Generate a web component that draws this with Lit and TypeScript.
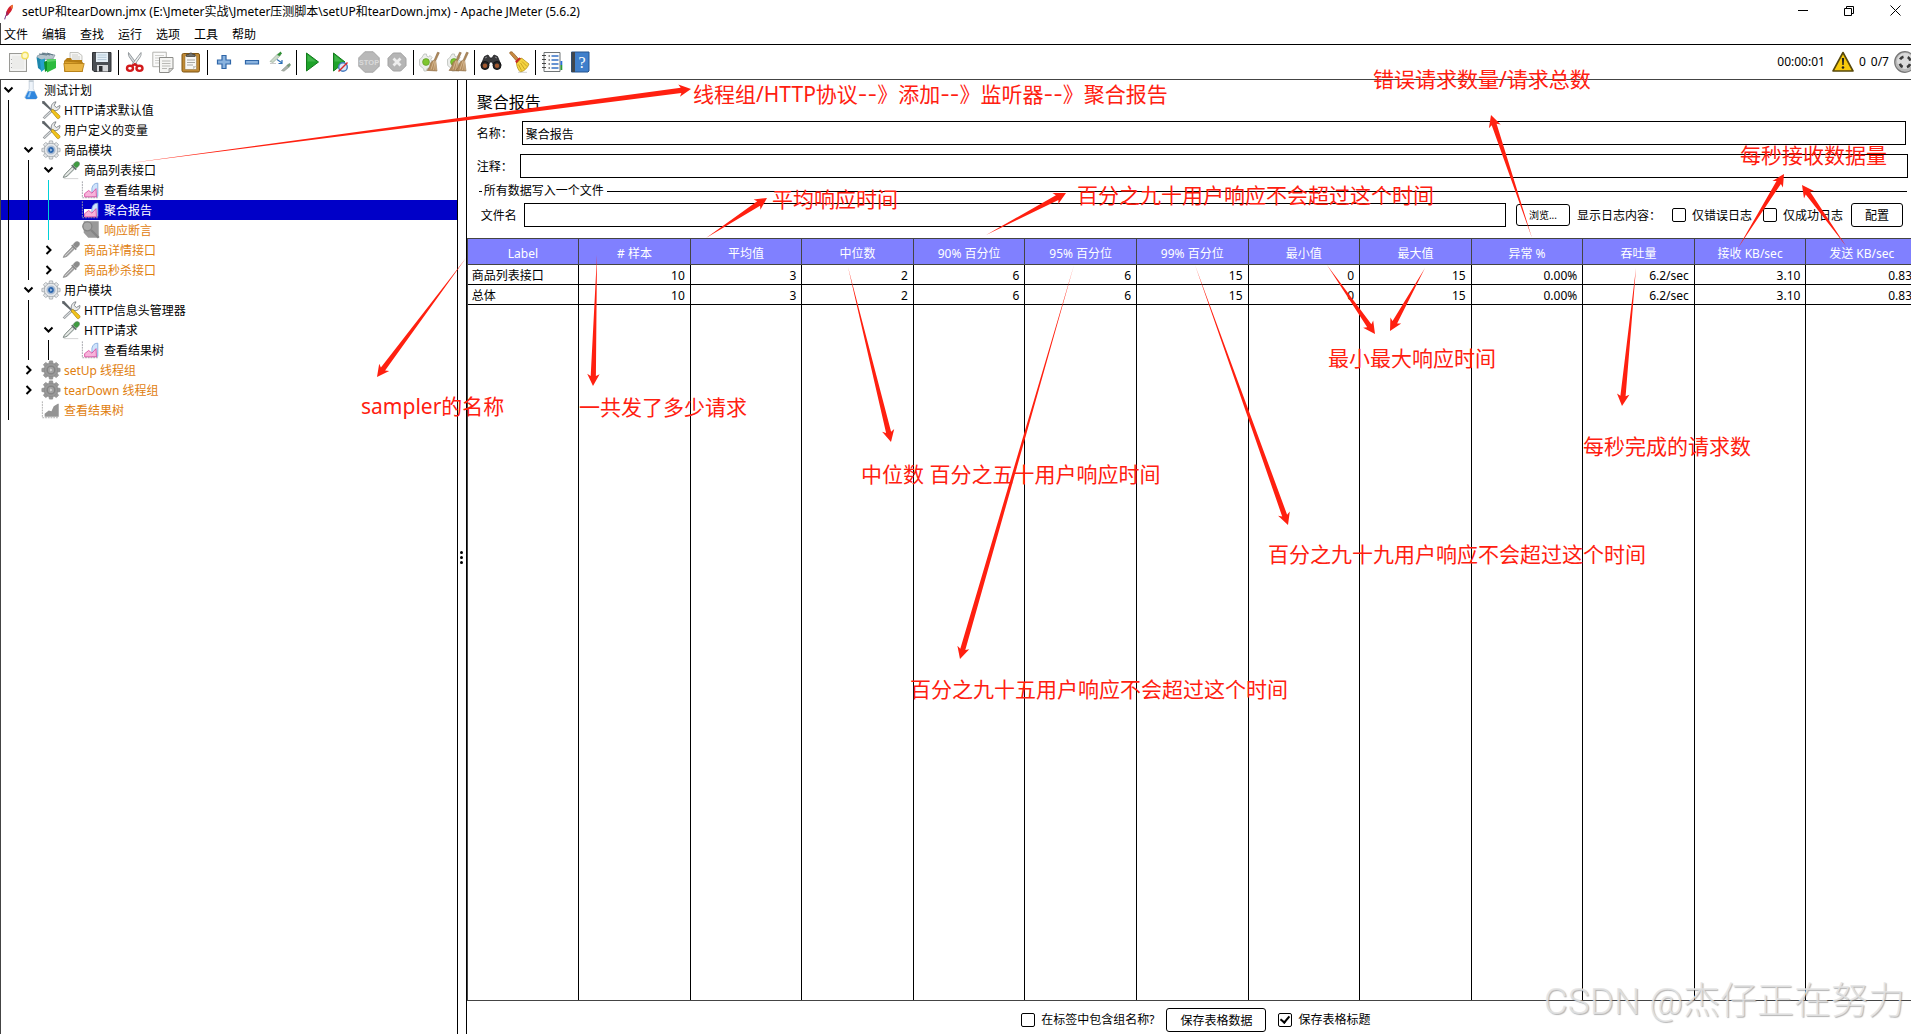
import { LitElement, html, svg, css, type TemplateResult } from "lit";
import { customElement, property } from "lit/decorators.js";
import { classMap } from "lit/directives/class-map.js";
import { styleMap } from "lit/directives/style-map.js";

type Art = TemplateResult;

const gearTeeth = (fill: string, stroke: string) =>
  [0, 45, 90, 135, 180, 225, 270, 315].map(
    (a) => svg`<path d="M8.6 4.4 9.3 1h3.4l.7 3.4z" fill=${fill} stroke=${stroke} stroke-width=".8" transform="rotate(${a} 11 11)"/>`,
  );

const gear = (fill: string, stroke: string, ring: string, core: string) => svg`
  ${gearTeeth(fill, stroke)}
  <circle cx="11" cy="11" r="7.4" fill=${fill} stroke=${stroke} stroke-width=".7"/>
  <circle cx="11" cy="11" r="4.2" fill="none" stroke=${ring} stroke-width="1.6"/>
  <circle cx="11" cy="11" r="3.2" fill=${core}/>
  <path d="M10.2 9.4v3.2l2.4-1.6z" fill="#fff" fill-opacity=".7"/>`;

const dropper = (bulb: string, body: string, edge: string, shadow: string) => svg`
  <path d="M3 20.5h16" stroke=${shadow} stroke-width="1"/>
  <path d="M2.5 19.2c.6-2 1.5-3.2 3-4.7l7-7 2.3 2.3-7 7c-1.5 1.4-3 2-5.3 2.4z" fill=${body} stroke=${edge} stroke-width=".9"/>
  <path d="m4.500 17.5 8.5-8.5" stroke="#fff" stroke-opacity=".6" stroke-width=".9"/>
  <path d="m11.2 6.2 1.2-1.2 5 5-1.2 1.2z" fill=${edge}/>
  <path d="M13.3 5.6c1-2.4 2.7-4 4.7-3.9 2.3.2 3.1 2.3 2 4.2-.6 1.1-1.7 2-3.2 3z" fill=${bulb} stroke=${edge} stroke-width=".5"/>`;

const broomHair = (x: number) => svg`
  <path d="M${x + 7.5} 1.2l1.8.6-3.6 8 1.3 10.2-10-.6c1.6-2 2.7-3.4 3-5.2.3-2 1.5-4.2 4.2-5.2z" fill="#b08a5c" stroke="#8b6a42" stroke-width=".6"/>
  <path d="M${x + 4} 9.5l-3 9M${x + 5.2} 10l-1.6 9M${x + 5.7} 10.5l.4 9" stroke="#dcc09a" stroke-width=".8" fill="none"/>`;

const cogPiece = (x: number) => svg`
  <path d="M${x + 5} 3h2.5l.3 2.2 1.6.7 1.8-1.3 1.9 1.9-1.3 1.8.6 1.6 2.3.3v2.6l-2.3.4-.7 1.5 1.4 1.9-1.9 1.8-1.8-1.3-1.6.7-.3 2.2H${x + 5}l-.3-2.2-4-3.3-.3-6 2.2-1.6z" fill="#eceeeb" stroke="#b9bdb8" stroke-width=".8"/>
  <circle cx="${x + 7}" cy="11" r="3.4" fill="#7fc62f" stroke="#5f9b25" stroke-width=".7"/>`;

const icons: Record<string, Art> = {
  feather: svg`
    <path d="M5 21c1-4 2-6.500 4-9" stroke="#6d2b7c" stroke-width="1.4" fill="none"/>
    <path d="M7 16C6.5 10 10 3.5 16 1c1 4-1.5 10-7.5 15z" fill="#d3202f"/>
    <path d="M13 3c1-1 2-1.5 3-2 .5 2 0 4.5-1 6.5z" fill="#f0782d"/>
    <path d="M7 16c-.2-2.5.2-4.5 1-6.5l2.5 5.2z" fill="#9c2362"/>`,
  blank: svg`
    <rect x="2.5" y="2.5" width="17" height="18" fill="#ececea" stroke="#9a9a96"/>
    <path d="M4 4h14v15H4z" fill="none" stroke="#fafafa"/>
    <path d="M4.5 8v9" stroke="#aaa" stroke-dasharray="1 3"/>
    <circle cx="18" cy="4.5" r="3.2" fill="#fff9c9" stroke="#f2df5c" stroke-width="1.4"/>`,
  templates: svg`
    <path d="M2 5 9 2l11 2-2 4-14 1z" fill="#b6c4cc" stroke="#708794" stroke-width=".6"/>
    <path d="m4 3 8 1M7 2l8 2M12 2l6 2" stroke="#5f7885" stroke-width="1"/>
    <path d="M1.5 6 7 9v11L3 17z" fill="#1d87ac"/>
    <path d="M5 9l5-1.5V18l-4 3z" fill="#25a2cb"/>
    <path d="M9 11l4-2v10l-3 2z" fill="#0f8f27"/>
    <path d="M12 8.5l9-.5v9l-9 4.5z" fill="#2dbb3f"/>
    <path d="m12 8.5 9-.5v2l-9 1z" fill="#5bd267"/>`,
  open: svg`
    <path d="M7 8V1.5h8l4 3V12H7z" fill="#f6f6f4" stroke="#b6b6b0" stroke-width=".8"/>
    <path d="M9 4h6M9 6h8M9 8h8" stroke="#cfcfca"/>
    <path d="M1.5 9.5 4 7h4l1 2h10v3H1.5z" fill="#b77e14"/>
    <path d="M1.5 20.5V10l18 1.5v9z" fill="#dba22d" stroke="#b27b13" stroke-width=".8"/>
    <path d="M.8 12.5h20.4l-2 8H2z" fill="#e9b544" stroke="#b27b13" stroke-width=".8"/>`,
  save: svg`
    <path d="M1.5 1.5h18.5v19h-17l-1.5-1.5z" fill="#4b4f54" stroke="#303336"/>
    <path d="M5 1.500h12v9.5H5z" fill="#e6f0f7"/>
    <path d="M6.5 4h9M6.5 6.3h9M6.5 8.6h9" stroke="#adc3d2" stroke-width=".9"/>
    <path d="M6 14h11v6.5H6z" fill="#d6d8da"/>
    <path d="M8 15h3.5v5.5H8z" fill="#2d2f32"/>`,
  cut: svg`
    <path d="M4.5 1.5c-.4 2 .2 4 1.5 5.5l5.5 8 1.5-2z" fill="#d6dadd" stroke="#83898d" stroke-width=".8"/>
    <path d="M17 1.5c.4 2-.2 4-1.5 5.5l-5.7 8-1.5-2z" fill="#eff1f2" stroke="#83898d" stroke-width=".8"/>
    <ellipse cx="6" cy="17.3" rx="3" ry="2.6" fill="#fff" stroke="#d21a1c" stroke-width="2.4"/>
    <ellipse cx="15.5" cy="17.3" rx="3" ry="2.6" fill="#fff" stroke="#d21a1c" stroke-width="2.4"/>
    <path d="m8 15 2.8-2 2.7 2" stroke="#d21a1c" stroke-width="2.2" fill="none"/>`,
  copy: svg`
    <path d="M.8 1.2h13.5v14.5H.8z" fill="#fafafa" stroke="#b4b4b0"/>
    <path d="M3 4.5h9M3 7h9M3 9.5h4M3 12h4" stroke="#d0d0cc"/>
    <path d="M7.5 6.5h13.5v11l-4 4h-9.5z" fill="#f5f5f3" stroke="#8d8d89"/>
    <path d="M10 10h8.5M10 12.5h8.5M10 15h8.5M10 17.5h5" stroke="#b9b9b5"/>
    <path d="M17 21.5v-4h4z" fill="#d7d7d3" stroke="#8d8d89" stroke-width=".7"/>`,
  paste: svg`
    <rect x="2" y="2.5" width="17.5" height="18.5" rx="1.5" fill="#c08a35" stroke="#7f5513"/>
    <path d="M5 5h11.5v13.5H5z" fill="#f7f7f5" stroke="#8d6b32" stroke-width=".5"/>
    <path d="M7 9h8M7 11.5h8M7 14h6" stroke="#a7a7a3"/>
    <path d="M13 18.5v-3.5h3.5z" fill="#c9c9c5"/>
    <path d="M6.5 5.500V3.500h2.300C9 1.500 12.500 1.500 12.800 3.500H15v2z" fill="#71716d" stroke="#3c3c3a" stroke-width=".7"/>`,
  plus: svg`<path d="M9 4.5h4V9h4.5v4H13v4.5H9V13H4.5V9H9z" fill="#8ab3df" stroke="#2f66a8" stroke-width="1.2"/>`,
  minus: svg`<path d="M4.5 9.5h13v3.5h-13z" fill="#8ab3df" stroke="#2f66a8" stroke-width="1.2"/>`,
  toggle: svg`
    <path d="m1 10.5 8-8 2.5 2-7.5 7z" fill="#ccdacb" stroke="#8b9f8a" stroke-width=".6"/>
    <path d="m8 4 3.5-3.5 1.5 2L10.5 5z" fill="#2f8f35"/>
    <path d="M1 12.5h6" stroke="#c9c9c9"/>
    <path d="m8 8.5 5 3.5m0-3v3.5H9.5" stroke="#2d6fb7" stroke-width="1.2" fill="none"/>
    <path d="m12.5 19.5 6-5.5 2 1.8-5.5 4.4z" fill="#aab3aa" stroke="#8b9188" stroke-width=".6"/>
    <path d="m17.5 14.5 3-2.5 1.5 2-2.3 2.2z" fill="#77997a"/>`,
  play: svg`<path d="M4.500 2 16.500 11 4.500 20z" fill="#1ea32a" stroke="#147a1d"/><path d="M5.500 4v6.5h8.500z" fill="#5cc664" opacity=".55"/>`,
  playNow: svg`
    <path d="M3.500 2 15 11 3.500 20z" fill="#1ea32a" stroke="#147a1d"/><path d="M4.500 4v6.5h8z" fill="#5cc664" opacity=".55"/>
    <circle cx="13" cy="16" r="4.3" fill="#d9e6f6" stroke="#4579be" stroke-width="1.4"/>
    <path d="m8.500 20.500 9-9" stroke="#d92b2b" stroke-width="1.5"/>`,
  stop: svg`
    <path d="M6.8.8h8.4l6 6v8.4l-6 6H6.8l-6-6V6.8z" fill="#b9b9b9" stroke="#a6a6a6"/>
    <text x="11" y="13.8" text-anchor="middle" font-size="7.5" font-weight="700" font-family="Liberation Sans, sans-serif" fill="#dadada">STOP</text>`,
  shutdown: svg`
    <path d="M7.3 2h7.4L20 7.3v7.4L14.7 20H7.3L2 14.7V7.3z" fill="#b5b5b5" stroke="#a2a2a2"/>
    <path d="m7.500 7.500 7 7m0-7-7 7" stroke="#eee" stroke-width="2.8"/>`,
  clear: svg`${cogPiece(0)}${broomHair(11)}`,
  clearAll: svg`${cogPiece(0)}${broomHair(5)}${broomHair(12)}`,
  search: svg`
    <path d="M4.5 5.5 8 4l2 3h2l2-3 3.5 1.5L21 14h-7.5L12 11h-2l-1.500 3H1z" fill="#3a3a3c" stroke="#1c1c1e" stroke-width=".8"/>
    <path d="m5 7 2-1M15 6l2 1" stroke="#8c8c90"/>
    <circle cx="5" cy="14.5" r="4" fill="#28282a" stroke="#111"/>
    <circle cx="17" cy="14.5" r="4" fill="#28282a" stroke="#111"/>
    <circle cx="5" cy="14.8" r="2.2" fill="#a3592f"/>
    <circle cx="17" cy="14.8" r="2.2" fill="#a3592f"/>`,
  searchReset: svg`
    <path d="M1.5 2c.5-1.5 2.5-1.7 3.5-.3l5.5 6-2.3 2z" fill="#c98a43" stroke="#8f5b20" stroke-width=".7"/>
    <path d="m7.2 10.2 4-3.7 2.5 1-5 5.5z" fill="#cc2424"/>
    <path d="m8.5 12.5 5-5.5 7.5 6c-1.5 4-4.5 7-8.5 8-2-1.5-3.5-4.5-4-8.5z" fill="#f5d33f" stroke="#b4921a" stroke-width=".8"/>
    <path d="m10.5 13.5 3 6M12.5 12l4 6M14 10.5l5 5" stroke="#c9a521" fill="none"/>
    <path d="M10 21.3h9" stroke="#bbb" stroke-width=".7"/>`,
  functions: svg`
    <path d="M3 1.5h16v19H3z" fill="#fbfbfb" stroke="#6f7476"/>
    <path d="M1 4.5h4M1 8.5h4M1 12.5h4M1 16.5h4" stroke="#444" stroke-width="1.2"/>
    <path d="M7.5 5h1.5M7.5 9h1.5M7.5 13h1.5M7.5 17h1.5" stroke="#222" stroke-width="1.2"/>
    <path d="M10.5 5h7M10.5 9h7M10.5 13h7M10.5 17h7" stroke="#3470c5" stroke-width="1.5"/>
    <path d="M19.500 10h1.800v4h-1.800z" fill="#2d6fd6"/><path d="M19.500 14h1.800v5h-1.800z" fill="#2a9a35"/>`,
  help: svg`
    <path d="M2.5 1h17.5v19l-1 1H2.5z" fill="#3f7fcb" stroke="#24558f"/>
    <path d="M2.5 1H6v20H2.5z" fill="#41464b"/>
    <text x="13" y="16.5" text-anchor="middle" font-size="16" font-family="Liberation Serif, serif" fill="#fff">?</text>`,
  warning: svg`
    <path d="M11 1.500 21 20H1z" fill="#f7ca0c" stroke="#57480a" stroke-width="1.6" stroke-linejoin="round"/>
    <path d="M9.9 7h2.2l-.4 7h-1.4z" fill="#222"/><circle cx="11" cy="16.5" r="1.3" fill="#222"/>`,
  state: svg`
    <circle cx="11" cy="11" r="10.3" fill="#b9b9b9" stroke="#777" stroke-width="1.2"/>
    <circle cx="11" cy="10" r="8" fill="#dcdcdc"/>
    <circle cx="11" cy="11" r="5.5" fill="none" stroke="#3b3b3b" stroke-width="2.6" stroke-dasharray="4.2 4.44" stroke-dashoffset="-2.2"/>`,
  flask: svg`
    <path d="M9 1.5h4.500v8l4.500 9.500-1.500 2H5.500L4 19l5-9.500z" fill="#eef4fa" stroke="#bcc8d4" stroke-width=".8"/>
    <path d="M7.8 12.5h7l3.200 6.700-1.300 1.600H6l-1.500-1.600z" fill="#2f86de"/>
    <path d="M9.5 13h2l-2 6H7z" fill="#8cc4f6"/>
    <path d="M8.5 1h5.500" stroke="#b5c0ca" stroke-width="1.400"/>`,
  tools: svg`
    <path d="m3 18.5 8.5-8 1.5 1.5L4.5 20c-1 .8-2.500-.5-1.500-1.500z" fill="#d9dcde" stroke="#6a7074" stroke-width=".8"/>
    <path d="M11.5 10.5c-1-4 .8-8 5-8.500l-2 4 2.500 2.200 3.800-2.200c.3 4-3.500 6.500-6.500 5.500z" fill="#e8eaeb" stroke="#62686c" stroke-width=".8"/>
    <path d="m1 1.500 2.500-.5 8 9-1.200 1.200L1.500 3.500z" fill="#5e6468"/>
    <path d="m11 12 2-1.800 7.500 7c1.300 1.500-1 4.300-2.700 3z" fill="#f2c41b" stroke="#a8810a" stroke-width=".8"/>`,
  group: gear("#e6e8ea", "#979da3", "#a9bad0", "#2a65ad"),
  groupOff: gear("#999", "#8a8a8a", "#858585", "#a3a3a3"),
  sampler: dropper("#3f9c40", "#d9ddda", "#61706a", "#cfcfcf"),
  samplerOff: dropper("#8c8c8c", "#a5a5a5", "#8a8a8a", "#fff"),
  chart: svg`
    <path d="M1.5 1.5v18h18" fill="none" stroke="#9d9da3" stroke-dasharray="2 1"/>
    <path d="M12 9c1-4 3-5.500 6.500-5.500v14.500H12z" fill="#cfe3fb" stroke="#7ea6dd" stroke-width=".9"/>
    <path d="M4 18.500v-3.500l4.500-3.500 3.500 3 4.500-5 .5 9z" fill="#f7b3da" stroke="#d7439c" stroke-width=".9"/>`,
  chartOff: svg`
    <path d="M1.5 1.5v18h18" fill="none" stroke="#aaa" stroke-dasharray="2 1"/>
    <path d="M4 18.5V15l4.500-3.500 3 1L14 7l4.500-3h1v14.500z" fill="#949494"/>`,
  assertOff: svg`
    <path d="M3 1.5h16.500v18H8L3 14z" fill="#999"/>
    <circle cx="7" cy="7" r="5" fill="#aaa" stroke="#858585" stroke-width="1.5"/>
    <path d="m11 11 8.500 8.500" stroke="#858585" stroke-width="2.6"/>`,
};

const draw = (name: string, size: "large" | "medium" | "small" = "large") =>
  html`<svg class="icon ${size}" viewBox="0 0 22 22" aria-hidden="true">${icons[name]}</svg>`;

const iconStyles = css`
  .icon { display: block; flex: none; width: 22px; height: 22px; }
  .icon.medium { width: 20px; height: 20px; }
  .icon.small { width: 16px; height: 16px; }
`;

const toolGroups: [string, string, boolean?][][] = [
  [["blank", "新建"], ["templates", "模板"], ["open", "打开"], ["save", "保存"]],
  [["cut", "剪切"], ["copy", "复制"], ["paste", "粘贴"]],
  [["plus", "展开"], ["minus", "收起"], ["toggle", "切换"]],
  [["play", "启动"], ["playNow", "不停顿开始"], ["stop", "停止", true], ["shutdown", "关闭", true]],
  [["clear", "清除"], ["clearAll", "清除全部"]],
  [["search", "查找"], ["searchReset", "重置查找"]],
  [["functions", "函数助手"], ["help", "帮助"]],
];

@customElement("jm-toolbar")
class JmToolbar extends LitElement {
  static styles = [
    iconStyles,
    css`
      :host { display: flex; align-items: center; height: 34px; padding-left: 4px; border-top: 1px solid #000; border-bottom: 1px solid #444; overflow: hidden; }
      .group { display: flex; align-items: center; }
      .group + .group::before { content: ""; width: 1px; height: 25px; margin: 0 2px; background: #000; }
      .tool { box-sizing: border-box; width: 28px; height: 28px; padding: 3px; border: 0; background: none; }
      .status { display: flex; align-items: center; margin-left: auto; gap: 5px; margin-right: -5px; }
      .clock { margin-right: 2px; }
    `,
  ];
  render() {
    return html`
      ${toolGroups.map(
        (group) => html`<div class="group">
          ${group.map(([name, label, off]) => html`<button class="tool" aria-label=${label} ?disabled=${off}>${draw(name)}</button>`)}
        </div>`,
      )}
      <div class="status">
        <span class="clock">00:00:01</span>${draw("warning")}<span>0</span><span>0/7</span>${draw("state")}
      </div>
    `;
  }
}

type TreeNode = { text: string; icon: string; guides: string; open?: boolean; leaf?: boolean; off?: boolean; selected?: boolean };

/* Each letter in guides is one indent column: k a black line, c a cyan line. */
const nodes: TreeNode[] = [
  { text: "测试计划", icon: "flask", guides: "", open: true },
  { text: "HTTP请求默认值", icon: "tools", guides: "k", leaf: true },
  { text: "用户定义的变量", icon: "tools", guides: "k", leaf: true },
  { text: "商品模块", icon: "group", guides: "k", open: true },
  { text: "商品列表接口", icon: "sampler", guides: "kk", open: true },
  { text: "查看结果树", icon: "chart", guides: "kkc", leaf: true },
  { text: "聚合报告", icon: "chart", guides: "kkc", leaf: true, selected: true },
  { text: "响应断言", icon: "assertOff", guides: "kkc", leaf: true, off: true },
  { text: "商品详情接口", icon: "samplerOff", guides: "kk", off: true },
  { text: "商品秒杀接口", icon: "samplerOff", guides: "kk", off: true },
  { text: "用户模块", icon: "group", guides: "k", open: true },
  { text: "HTTP信息头管理器", icon: "tools", guides: "kk", leaf: true },
  { text: "HTTP请求", icon: "sampler", guides: "kk", open: true },
  { text: "查看结果树", icon: "chart", guides: "kkk", leaf: true },
  { text: "setUp 线程组", icon: "groupOff", guides: "k", off: true },
  { text: "tearDown 线程组", icon: "groupOff", guides: "k", off: true },
  { text: "查看结果树", icon: "chartOff", guides: "k", leaf: true, off: true },
];

@customElement("jm-tree")
class JmTree extends LitElement {
  static styles = [
    iconStyles,
    css`
      :host { display: block; overflow: hidden; }
      .tree { margin: 0; padding: 0; list-style: none; }
      .node { display: flex; align-items: center; height: 20px; white-space: nowrap; }
      .guide { width: 20px; height: 20px; background: linear-gradient(#000, #000) 7px 0 / 1px 100% no-repeat; }
      .guide.c { background-image: linear-gradient(#00d0d8, #00d0d8); }
      .twist { width: 20px; height: 20px; padding: 0; border: 0; background: none; }
      .chevron { display: block; width: 15px; height: 20px; fill: none; stroke: #000; stroke-width: 2; }
      .text { padding: 2px 0 0 3px; }
      .off { color: #df8010; }
      .selected { background: #0000c8; color: #fff; }
      .selected .icon { background: linear-gradient(#fff, #fff) 3px 9px / 13px 8px no-repeat; }
    `,
  ];
  render() {
    return html`<ul class="tree" role="tree">
      ${nodes.map(
        (n) => html`<li class=${classMap({ node: true, off: !!n.off, selected: !!n.selected })} role="treeitem" aria-level=${n.guides.length + 1}>
          ${[...n.guides].map((g) => html`<span class="guide ${g}"></span>`)}
          ${n.leaf
            ? html`<span class="twist"></span>`
            : html`<button class="twist" aria-label=${n.open ? "收起" : "展开"}>
                <svg class="chevron" viewBox="0 0 15 20"><path d=${n.open ? "M3.5 7.5l4 4 4-4" : "M5.5 6l4 4-4 4"} /></svg>
              </button>`}
          ${draw(n.icon, "medium")}<span class="text">${n.text}</span>
        </li>`,
      )}
    </ul>`;
  }
}

const columns = ["Label", "# 样本", "平均值", "中位数", "90% 百分位", "95% 百分位", "99% 百分位", "最小值", "最大值", "异常 %", "吞吐量", "接收 KB/sec", "发送 KB/sec"];
const records = ["商品列表接口", "总体"].map((name) => [name, "10", "3", "2", "6", "6", "15", "0", "15", "0.00%", "6.2/sec", "3.10", "0.83"]);

@customElement("jm-report")
class JmReport extends LitElement {
  static styles = css`
    :host { display: flex; flex-direction: column; min-width: 0; overflow: hidden; }
    .heading { margin: 0; padding: 10px 10px 0; font-size: 16px; line-height: 24px; font-weight: 400; }
    .fields { display: flex; flex-direction: column; gap: 9px; padding: 7px 3px 0 10px; }
    .field { display: flex; align-items: center; }
    .field-label { width: 43px; padding-top: 2px; }
    .name-label { width: 45px; padding-top: 2px; }
    .box { box-sizing: border-box; flex: 1; min-width: 0; height: 24px; padding: 2px 3px 0; border: 1px solid #000; background: #fff; color: #000; font: inherit; }
    .name-row { padding-right: 2px; }
    .file { min-width: 0; margin: 5px 4px 0 10px; padding: 0 4px; border: 0; }
    .legend { display: flex; align-items: center; gap: 2px; box-sizing: border-box; width: 100%; margin-left: -4px; padding: 0 0 0 2px; line-height: 16px; }
    .legend::before { content: ""; width: 3px; height: 1px; background: #000; }
    .legend::after { content: ""; flex: 1; height: 1px; margin: 0 -8px 0 1px; background: #000; }
    .file-row { display: flex; align-items: center; margin-top: 4px; }
    .file-label { width: 43px; padding-top: 2px; }
    .btn { box-sizing: border-box; height: 24px; padding: 2px 13px 0; border: 1px solid #000; border-radius: 3px; background: #fff; color: #000; font: inherit; }
    .browse { height: 22px; margin: 0 7px 0 10px; padding: 0 12px; font-size: 10px; }
    .check { display: flex; align-items: center; gap: 6px; }
    .caption { padding-top: 1px; }
    .tick { appearance: none; box-sizing: border-box; width: 14px; height: 14px; margin: 0; border: 1px solid #000; border-radius: 2px; background: #fff; }
    .tick:checked::after { content: ""; display: block; box-sizing: border-box; width: 6px; height: 9px; margin: 0 0 0 3px; border: solid #000; border-width: 0 2px 2px 0; transform: rotate(40deg); }
    .log { width: 95px; padding-top: 2px; }
    .errors { margin-right: 11px; }
    .config { margin-left: 8px; }
    .grid { flex: 1; min-height: 0; margin-top: 11px; overflow: hidden; border: solid #444; border-width: 1px 0 1px 1px; }
    .table { width: calc(100% + 7px); height: 100%; table-layout: fixed; border-collapse: separate; border-spacing: 0; }
    .head { height: 26px; padding: 4px 0 0; border-right: 1px solid #444; border-bottom: 1px solid #444; box-sizing: border-box; background: #8080ff; color: #fff; font-weight: 400; }
    .cell { box-sizing: border-box; height: 20px; padding: 2px 5px 0 4px; border-right: 1px solid #000; border-bottom: 1px solid #000; text-align: right; line-height: 16px; white-space: nowrap; }
    .cell:first-child { text-align: left; }
    .rest { padding: 0; border-right: 1px solid #000; }
    .footer { display: flex; align-items: center; justify-content: center; gap: 12px; height: 33px; padding: 4px 0 0 14px; box-sizing: border-box; }
  `;
  render() {
    return html`
      <h1 class="heading">聚合报告</h1>
      <div class="fields">
        <div class="field name-row"><label class="name-label" for="name">名称：</label><input class="box" id="name" .value=${"聚合报告"} /></div>
        <div class="field"><label class="field-label" for="note">注释：</label><input class="box" id="note" /></div>
      </div>
      <fieldset class="file">
        <legend class="legend">所有数据写入一个文件</legend>
        <div class="file-row">
          <label class="file-label" for="file">文件名</label><input class="box" id="file" />
          <button class="btn browse">浏览...</button>
          <span class="log">显示日志内容：</span>
          <label class="check errors"><input class="tick" type="checkbox" /><span class="caption">仅错误日志</span></label>
          <label class="check"><input class="tick" type="checkbox" /><span class="caption">仅成功日志</span></label>
          <button class="btn config">配置</button>
        </div>
      </fieldset>
      <div class="grid">
        <table class="table">
          <thead><tr>${columns.map((c) => html`<th class="head" scope="col">${c}</th>`)}</tr></thead>
          <tbody>
            ${records.map((r) => html`<tr>${r.map((v) => html`<td class="cell">${v}</td>`)}</tr>`)}
            <tr aria-hidden="true">${columns.map(() => html`<td class="rest"></td>`)}</tr>
          </tbody>
        </table>
      </div>
      <div class="footer">
        <label class="check"><input class="tick" type="checkbox" /><span class="caption">在标签中包含组名称?</span></label>
        <button class="btn">保存表格数据</button>
        <label class="check"><input class="tick" type="checkbox" checked /><span class="caption">保存表格标题</span></label>
      </div>
    `;
  }
}

/* Left x and centre line y of every note on the canvas. */
const notes: [number, number, string][] = [
  [693, 94, "线程组/HTTP协议--》添加--》监听器--》聚合报告"],
  [1373, 79, "错误请求数量/请求总数"],
  [1740, 155, "每秒接收数据量"],
  [772, 199, "平均响应时间"],
  [1077, 195, "百分之九十用户响应不会超过这个时间"],
  [361, 406, "sampler的名称"],
  [579, 407, "一共发了多少请求"],
  [861, 474, "中位数 百分之五十用户响应时间"],
  [1328, 358, "最小最大响应时间"],
  [1583, 446, "每秒完成的请求数"],
  [1268, 554, "百分之九十九用户响应不会超过这个时间"],
  [910, 689, "百分之九十五用户响应不会超过这个时间"],
];

const arrows: [number, number, number, number][] = [
  [123, 164, 691, 89],
  [706, 238, 767, 198],
  [986, 235, 1066, 193],
  [1532, 238, 1491, 115],
  [1738, 248, 1784, 174],
  [1846, 246, 1802, 185],
  [466, 258, 377, 377],
  [597, 255, 593, 386],
  [848, 267, 891, 442],
  [1074, 265, 960, 659],
  [1195, 265, 1288, 525],
  [1327, 265, 1375, 334],
  [1425, 268, 1390, 331],
  [1636, 268, 1622, 406],
];

const arrowPoints = ([x1, y1, x2, y2]: [number, number, number, number]) => {
  const len = Math.hypot(x2 - x1, y2 - y1);
  const ux = (x2 - x1) / len;
  const uy = (y2 - y1) / len;
  const at = (along: number, side: number) => `${(x1 + ux * along - uy * side).toFixed(1)},${(y1 + uy * along + ux * side).toFixed(1)}`;
  return [at(0, 0), at(len - 10, 2.6), at(len - 12, 6.2), at(len, 0), at(len - 12, -6.2), at(len - 10, -2.6)].join(" ");
};

const withDashes = (text: string) => text.split("--").map((part, i) => (i ? html`<span class="dash">--</span>${part}` : part));

@customElement("jm-notes")
class JmNotes extends LitElement {
  static styles = css`
    :host { position: absolute; inset: 0; overflow: hidden; pointer-events: none; color: #ff2010; font-size: 21px; line-height: 28px; }
    .arrows { position: absolute; inset: 0; width: 100%; height: 100%; fill: #ff2010; }
    .note { position: absolute; white-space: nowrap; }
    .dash { font-family: Inter, sans-serif; }
    .mark { position: absolute; right: 6px; bottom: 8px; font: 300 37px/48px Roboto, "Noto Sans CJK SC", sans-serif; white-space: nowrap; color: rgba(228, 228, 228, 0.85); text-shadow: 1px 1px 1px rgba(130, 130, 130, 0.6); }
  `;
  render() {
    return html`
      <svg class="arrows" aria-hidden="true">${arrows.map((a) => svg`<polygon points=${arrowPoints(a)} />`)}</svg>
      ${notes.map(([x, y, text]) => html`<span class="note" style=${styleMap({ left: `${x}px`, top: `${y - 14}px` })}>${withDashes(text)}</span>`)}
      <span class="mark">CSDN @杰仔正在努力</span>
    `;
  }
}

const windowButtons: [string, string][] = [
  ["最小化", "M1 6.5h10"],
  ["还原", "M1.5 4.5h7v7h-7zM3.5 4.5v-2h7v7h-2"],
  ["关闭", "m1.5 1.5 10 10m0-10-10 10"],
];

@customElement("app-root")
class AppRoot extends LitElement {
  static styles = [
    iconStyles,
    css`
      :host { position: relative; display: flex; flex-direction: column; height: 100vh; overflow: hidden; background: #fff; color: #000; font: 12px/16px "Noto Sans", "Noto Sans CJK SC", sans-serif; }
      .title { display: flex; align-items: center; height: 23px; padding-left: 1px; gap: 5px; }
      .caption { white-space: pre; }
      .window { display: flex; gap: 34px; margin: 0 10px 3px auto; }
      .win { width: 12px; height: 13px; padding: 0; border: 0; background: none; }
      .glyph { display: block; width: 12px; height: 13px; fill: none; stroke: #000; }
      .menu { display: flex; gap: 14px; height: 21px; padding-left: 3px; border-left: 1px solid #444; }
      .entry { height: 21px; padding: 2px 0 0; border: 0; background: none; color: #000; font: inherit; }
      .body { display: flex; flex: 1; min-height: 0; }
      .side { width: 24%; box-sizing: border-box; margin-right: -2px; border-left: 1px solid #444; }
      .divider { display: flex; flex-direction: column; align-items: center; justify-content: center; gap: 2px; width: 8px; border: solid #000; border-width: 0 1px; background: #fff; }
      .dot { width: 3px; height: 3px; border-radius: 50%; background: #000; }
      .main { flex: 1; }
    `,
  ];
  @property() caption = "setUP和tearDown.jmx (E:\\Jmeter实战\\Jmeter压测脚本\\setUP和tearDown.jmx) - Apache JMeter (5.6.2)";
  render() {
    return html`
      <header class="title">
        ${draw("feather", "small")}<span class="caption">${this.caption}</span>
        <div class="window">
          ${windowButtons.map(([label, d]) => html`<button class="win" aria-label=${label}><svg class="glyph" viewBox="0 0 12 13"><path d=${d} /></svg></button>`)}
        </div>
      </header>
      <nav class="menu">${["文件", "编辑", "查找", "运行", "选项", "工具", "帮助"].map((m) => html`<button class="entry">${m}</button>`)}</nav>
      <jm-toolbar></jm-toolbar>
      <div class="body">
        <jm-tree class="side"></jm-tree>
        <div class="divider"><span class="dot"></span><span class="dot"></span><span class="dot"></span></div>
        <jm-report class="main"></jm-report>
      </div>
      <jm-notes></jm-notes>
    `;
  }
}
